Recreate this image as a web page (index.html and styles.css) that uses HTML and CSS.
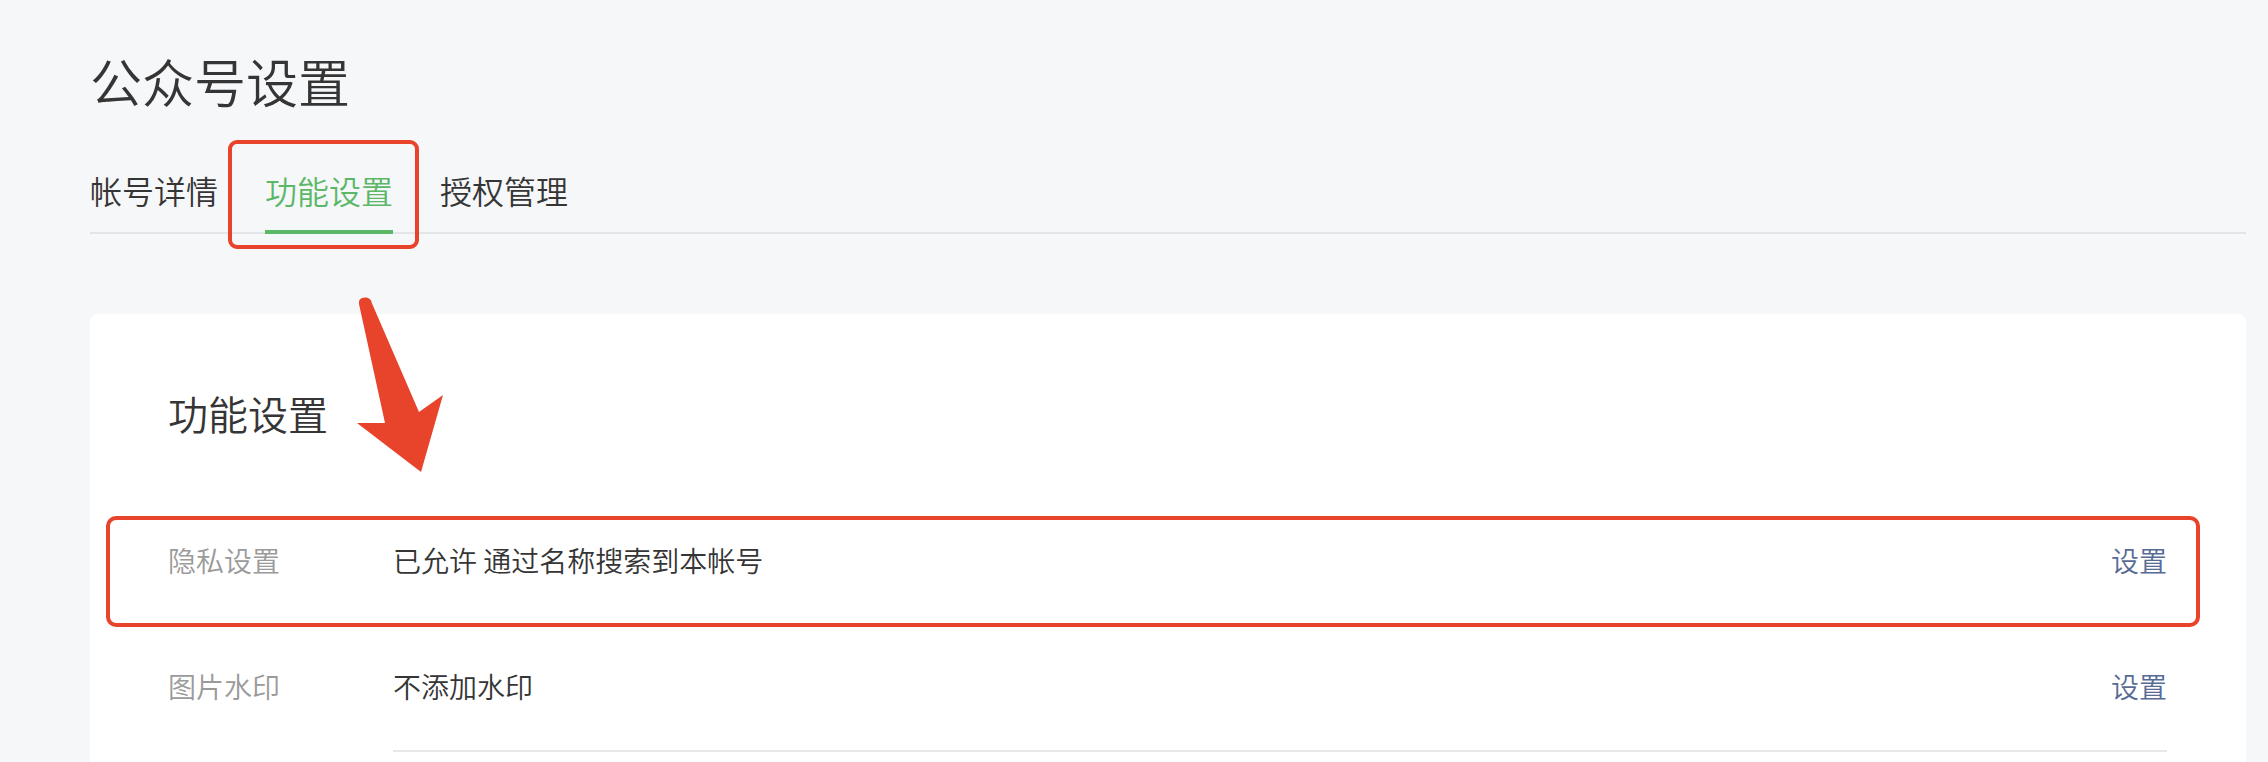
FILE: index.html
```html
<!DOCTYPE html>
<html lang="zh-CN">
<head>
<meta charset="utf-8">
<title>公众号设置</title>
<link rel="stylesheet" href="styles.css">
</head>
<body>
<div class="page">
  <h1 class="page-title">公众号设置</h1>
  <nav class="tabs">
    <a class="tab">帐号详情</a>
    <a class="tab tab-active">功能设置<span class="mark mark-tab"></span></a>
    <a class="tab">授权管理</a>
  </nav>
  <section class="card">
    <svg class="arrow" width="92" height="180" viewBox="0 0 92 180">
      <path d="M4 8 Q3 1.5 10 1.5 Q16 1.5 16.8 7 L64 116 L88 99 L66 176 L2 127 L30 127 Z" fill="#e8432b"/>
    </svg>
    <h2 class="card-title">功能设置</h2>
    <div class="rows">
      <div class="row">
        <span class="mark mark-row"></span>
        <div class="row-label">隐私设置</div>
        <div class="row-body">
          <div class="row-value">已允许 通过名称搜索到本帐号</div>
          <a class="row-link">设置</a>
        </div>
      </div>
      <div class="row">
        <div class="row-label">图片水印</div>
        <div class="row-body">
          <div class="row-value">不添加水印</div>
          <a class="row-link">设置</a>
        </div>
      </div>
    </div>
  </section>
</div>
</body>
</html>
```

FILE: styles.css
```css
html, body {
  margin: 0;
  padding: 0;
  background: #f6f7f9;
  overflow: hidden;
}
body {
  font-family: "Noto Sans CJK SC", "Noto Sans", sans-serif;
  font-weight: 350;
  color: #353535;
}
.page {
  padding: 51px 22px 0 90px;
}
.page-title {
  margin: 0;
  font-size: 52px;
  line-height: 60px;
  font-weight: 350;
  color: #353535;
}
.tabs {
  display: flex;
  gap: 47px;
  margin-top: 59px;
  border-bottom: 2px solid #e4e5e7;
}
.tab {
  position: relative;
  display: block;
  font-size: 32px;
  line-height: 40px;
  padding-bottom: 20px;
  margin-bottom: -2px;
  border-bottom: 4px solid transparent;
  color: #353535;
}
.tab-active {
  color: #5ab867;
  border-bottom-color: #5ab867;
}
.mark {
  position: absolute;
  border: 4px solid #e8432b;
  box-sizing: border-box;
  pointer-events: none;
}
.mark-tab {
  left: -37px;
  top: -30px;
  width: 191px;
  height: 109px;
  border-radius: 9px;
}
.card {
  position: relative;
  margin-top: 80px;
  background: #ffffff;
  border-radius: 8px;
  padding: 75px 79px 60px 78px;
}
.arrow {
  position: absolute;
  left: 265px;
  top: -18px;
}
.card-title {
  margin: 0;
  font-size: 40px;
  line-height: 48px;
  font-weight: 350;
  color: #353535;
}
.rows {
  margin-top: 63px;
}
.row {
  position: relative;
  display: flex;
}
.mark-row {
  left: -62px;
  top: 16px;
  width: 2094px;
  height: 111px;
  border-radius: 10px;
}
.row-label {
  width: 225px;
  flex: none;
  font-size: 28px;
  line-height: 40px;
  padding-top: 40px;
  color: #9a9a9a;
}
.row-body {
  flex: 1;
  display: flex;
  justify-content: space-between;
  align-items: flex-start;
  padding: 40px 0 44px;
  border-bottom: 2px solid #e7e8ea;
  font-size: 28px;
  line-height: 40px;
}
.row-value {
  color: #353535;
}
.row-link {
  color: #576b95;
}
```
